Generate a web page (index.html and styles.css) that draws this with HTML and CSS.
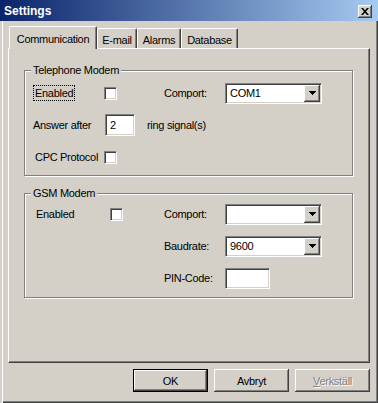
FILE: index.html
```html
<!DOCTYPE html>
<html lang="en">
<head>
  <meta charset="UTF-8" />
  <title>Settings</title>
  <link rel="stylesheet" href="styles.css">
</head>
<body>
<div class="window">
  <div class="titlebar">
    <span class="title">Settings</span>
    <div class="close">
      <svg width="8" height="7" viewBox="0 0 8 7"><path d="M0 0h2l2 2.3L6 0h2L5 3.5 8 7H6L4 4.7 2 7H0l3-3.5z" fill="#000"/></svg>
    </div>
  </div>

  <div class="tabs">
    <div class="tab active tab-comm">Communication</div>
    <div class="tab tab-mail">E-mail</div>
    <div class="tab tab-alarms">Alarms</div>
    <div class="tab tab-db">Database</div>
  </div>

  <div class="panel">
    <div class="group phone">
      <span class="legend">Telephone Modem</span>
      <div class="row">
        <div class="lbl"><span class="focus">Enabled</span></div>
        <div class="check"></div>
        <div class="lbl-right">Comport:</div>
        <div class="combo"><div class="value">COM1</div><div class="arrow"><svg width="7" height="4" viewBox="0 0 7 4"><path d="M0 0h7v1h-1v1h-1v1h-1v1h-1v-1h-1v-1h-1v-1h-1z"/></svg></div></div>
      </div>
      <div class="row">
        <div class="lbl lbl-answer">Answer after</div>
        <div class="field small">2</div>
        <div class="after">ring signal(s)</div>
      </div>
      <div class="row">
        <div class="lbl"><span class="plain">CPC Protocol</span></div>
        <div class="check"></div>
      </div>
    </div>

    <div class="group gsm">
      <span class="legend">GSM Modem</span>
      <div class="row">
        <div class="lbl lbl-gsm">Enabled</div>
        <div class="check"></div>
        <div class="lbl-right gsm-comport">Comport:</div>
        <div class="combo"><div class="value"></div><div class="arrow"><svg width="7" height="4" viewBox="0 0 7 4"><path d="M0 0h7v1h-1v1h-1v1h-1v1h-1v-1h-1v-1h-1v-1h-1z"/></svg></div></div>
      </div>
      <div class="row">
        <div class="lbl-right indent">Baudrate:</div>
        <div class="combo"><div class="value">9600</div><div class="arrow"><svg width="7" height="4" viewBox="0 0 7 4"><path d="M0 0h7v1h-1v1h-1v1h-1v1h-1v-1h-1v-1h-1v-1h-1z"/></svg></div></div>
      </div>
      <div class="row">
        <div class="lbl-right indent">PIN-Code:</div>
        <div class="field pin"></div>
      </div>
    </div>
  </div>

  <div class="buttons">
    <div class="btn default">OK</div>
    <div class="btn">Avbryt</div>
    <div class="btn disabled"><span><u>V</u>erkställ</span></div>
  </div>
</div>
</body>
</html>
```

FILE: styles.css
```css
body {
  margin: 0;
  font-family: "Liberation Sans", Arial, sans-serif;
  font-size: 11px;
  letter-spacing: -0.3px;
  color: #000;
}

.window {
  width: 378px;
  height: 403px;
  background: #d4d0c8;
  box-shadow: inset 2px 0 0 #d4d0c8, inset 3px 0 0 #fff, inset -1px -1px 0 #404040, inset -2px -2px 0 #808080;
  overflow: hidden;
}

.titlebar {
  height: 21px;
  background: linear-gradient(to right, #0a246a, #a6caf0);
  display: flex;
  align-items: center;
  justify-content: space-between;
  padding: 0 6px 0 4px;
}

.title {
  color: #fff;
  font-weight: bold;
  font-size: 12px;
  letter-spacing: 0;
}

.close {
  width: 14px;
  height: 13px;
  margin-top: 1px;
  background: #d4d0c8;
  box-shadow: inset -1px -1px 0 #404040, inset 1px 1px 0 #fff, inset -2px -2px 0 #808080;
  display: flex;
  align-items: center;
  justify-content: center;
}

/* tab strip */
.tabs {
  display: flex;
  align-items: flex-end;
  height: 22px;
  margin: 5px 0 0 9px;
  position: relative;
  z-index: 1;
}

.tab {
  height: 20px;
  box-sizing: border-box;
  border-top: 1px solid #fff;
  border-left: 1px solid #fff;
  border-right: 1px solid #404040;
  border-radius: 2px 2px 0 0;
  box-shadow: inset -1px 0 0 #808080;
  background: #d4d0c8;
  display: flex;
  align-items: center;
  justify-content: center;
  padding-top: 2px;
}

.tab.active {
  height: 23px;
  margin-bottom: -1px;
  padding-top: 1px;
}

.tab-comm { width: 88px; }
.tab-mail { width: 40px; }
.tab-alarms { width: 44px; }
.tab-db { width: 57px; }

.panel {
  margin-left: 8px;
  width: 362px;
  height: 315px;
  box-sizing: border-box;
  border-top: 1px solid #fff;
  border-left: 1px solid #fff;
  border-right: 1px solid #404040;
  border-bottom: 1px solid #404040;
  box-shadow: inset -1px -1px 0 #808080;
  padding: 21px 0 0 15px;
}

/* group boxes */
.group {
  position: relative;
  width: 329px;
  box-sizing: border-box;
  border: 1px solid #808080;
  box-shadow: 1px 1px 0 #fff, inset 1px 1px 0 #fff;
  padding-left: 9px;
}

.group.phone {
  height: 106px;
  padding-top: 6px;
}

.group.gsm {
  height: 105px;
  margin-top: 17px;
  padding-top: 4px;
}

.legend {
  position: absolute;
  top: -7px;
  left: 6px;
  padding: 0 2px;
  line-height: 13px;
  background: #d4d0c8;
}

.row {
  display: flex;
  align-items: center;
  height: 32px;
}

.lbl {
  width: 70px;
}

.focus {
  outline: 1px dotted #000;
  padding: 1px;
}

.plain {
  padding-left: 1px;
}

.lbl-answer {
  width: 71px;
  margin-left: -1px;
}

.lbl-gsm {
  width: 74px;
  padding-left: 2px;
}

.lbl-right {
  width: 61px;
  margin-left: 47px;
}

.gsm-comport {
  margin-left: 41px;
}

.lbl-right.indent {
  margin-left: 130px;
}

.after {
  margin-left: 12px;
}

/* sunken controls */
.check,
.combo,
.field {
  box-sizing: border-box;
  background: #fff;
  border: 1px solid;
  border-color: #808080 #fff #fff #808080;
  box-shadow: inset 1px 1px 0 #404040, inset -1px -1px 0 #d4d0c8;
}

.check {
  width: 13px;
  height: 13px;
}

.combo {
  width: 97px;
  height: 21px;
  padding: 1px;
  display: flex;
}

.combo .value {
  flex: 1;
  padding-left: 3px;
  display: flex;
  align-items: center;
}

.combo .arrow {
  width: 16px;
  background: #d4d0c8;
  box-shadow: inset -1px -1px 0 #404040, inset 1px 1px 0 #fff, inset -2px -2px 0 #808080;
  display: flex;
  align-items: center;
  justify-content: center;
}

.field {
  height: 21px;
  display: flex;
  align-items: center;
  padding-left: 4px;
}

.field.small {
  width: 30px;
  height: 22px;
  margin-left: 1px;
}

.field.pin {
  width: 45px;
}

/* dialog buttons */
.buttons {
  display: flex;
  justify-content: flex-end;
  gap: 6px;
  margin-top: 6px;
  padding-right: 8px;
}

.btn {
  width: 75px;
  height: 23px;
  box-sizing: border-box;
  box-shadow: inset -1px -1px 0 #404040, inset 1px 1px 0 #fff, inset -2px -2px 0 #808080;
  display: flex;
  align-items: center;
  justify-content: center;
}

.btn.default {
  border: 1px solid #000;
}

.btn.disabled {
  color: #808080;
  text-shadow: 1px 1px 0 #fff;
}
```
